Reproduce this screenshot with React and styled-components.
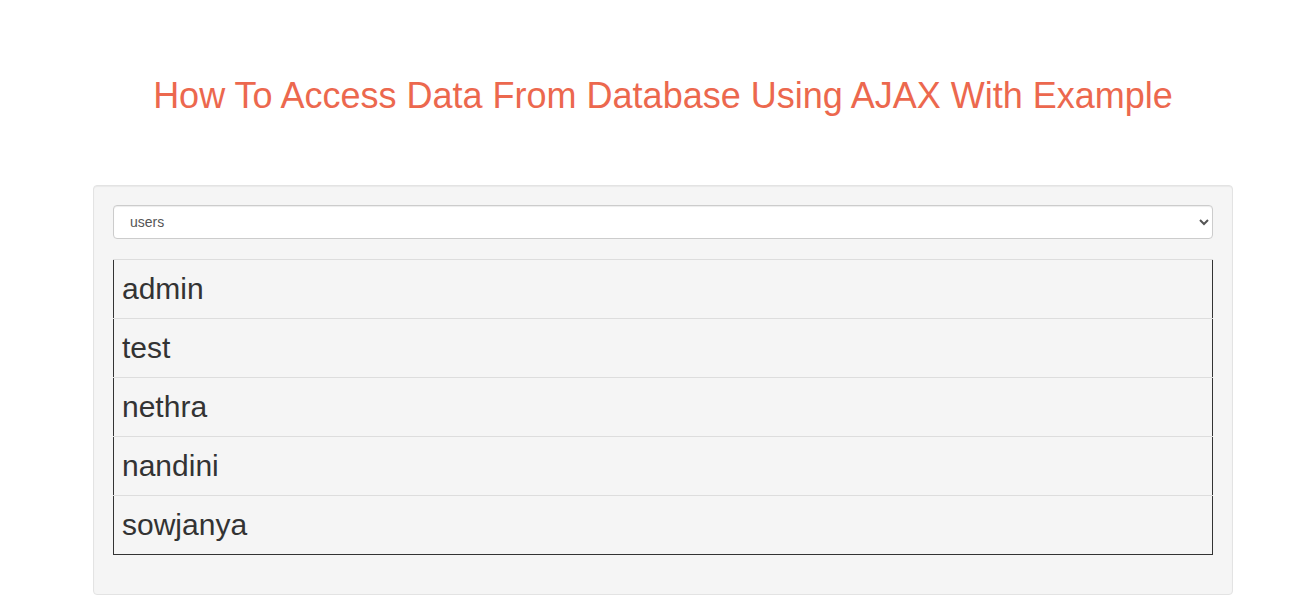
import React, { useState } from 'react';
import styled, { createGlobalStyle } from 'styled-components';

const GlobalStyle = createGlobalStyle`
  * { box-sizing: border-box; }
  body {
    margin: 0;
    background: #fff;
    font-family: "Liberation Sans", Arial, Helvetica, sans-serif;
    font-size: 14px;
    line-height: 1.42857;
    color: #333;
  }
`;

const users = ['admin', 'test', 'nethra', 'nandini', 'sowjanya'];

const App = () => {
  const [table, setTable] = useState('users');

  return (
    <>
      <GlobalStyle />
      <Page>
        <Title>How To Access Data From Database Using AJAX With Example</Title>
        <Well>
          <Select value={table} onChange={(e) => setTable(e.target.value)}>
            <option value="users">users</option>
          </Select>
          <Table>
            <tbody>
              {users.map((name) => (
                <tr key={name}>
                  <Cell>{name}</Cell>
                </tr>
              ))}
            </tbody>
          </Table>
        </Well>
      </Page>
    </>
  );
};

const Page = styled.div`
  width: 1140px;
  margin-left: 93px;
  padding-top: 76px;
`;

const Title = styled.h1`
  margin: 0 0 69px;
  text-align: center;
  font-size: 36px;
  font-weight: 400;
  line-height: 40px;
  color: #ec684e;
`;

const Well = styled.div`
  background-color: #f5f5f5;
  border: 1px solid #e3e3e3;
  border-radius: 4px;
  padding: 19px 19px 39px;
  box-shadow: inset 0 1px 1px rgba(0, 0, 0, 0.05);
`;

const Select = styled.select`
  display: block;
  width: 100%;
  height: 34px;
  padding: 6px 12px;
  margin-bottom: 20px;
  font-family: "Liberation Sans", Arial, sans-serif;
  font-size: 14px;
  color: #555;
  background-color: #fff;
  border: 1px solid #ccc;
  border-radius: 4px;
  box-shadow: inset 0 1px 1px rgba(0, 0, 0, 0.075);
`;

const Table = styled.table`
  width: 100%;
  border-collapse: collapse;
  border-left: 1px solid #333;
  border-right: 1px solid #333;
  border-bottom: 1px solid #333;
`;

const Cell = styled.td`
  padding: 8px;
  border-top: 1px solid #ddd;
  font-size: 30px;
  line-height: 42px;
  color: #333;
`;

export default App;
